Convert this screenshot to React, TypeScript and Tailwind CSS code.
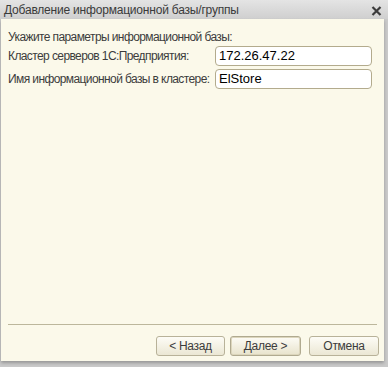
export default function App() {
  return (
    <div className="h-[367px] w-[388px] overflow-hidden bg-[#c9c9c9] font-['Liberation_Sans',Arial,sans-serif]">
      <div className="flex h-[19px] items-center justify-between bg-gradient-to-b from-[#e4e4e4] to-[#cfcfcf] pl-[4px] pr-[6px]">
        <span className="text-[12px] leading-none tracking-[-0.2px] text-[#3a3a3a]">
          Добавление информационной базы/группы
        </span>
        <svg width="11" height="10" viewBox="0 0 11 10" className="mt-[2px]">
          <path d="M1.5 1 L9.5 9 M9.5 1 L1.5 9" stroke="#3c3c3c" strokeWidth="2.2" />
        </svg>
      </div>
      <div className="ml-[1px] flex h-[342px] w-[383px] flex-col bg-[#fbf9ea] shadow-[0_2px_3px_rgba(0,0,0,0.25)]">
        <div className="flex flex-col px-[7px] pt-[11px] text-[12px] tracking-[-0.6px] text-[#3c3c3c]">
          <div className="leading-[14px]">Укажите параметры информационной базы:</div>
          <div className="mt-[2px] flex items-center justify-between pr-[5px]">
            <span>Кластер серверов 1С:Предприятия:</span>
            <div className="flex h-[20px] w-[157px] items-center rounded-[4px] border border-[#b3ab8d] bg-white px-[3px] text-[13px] tracking-normal text-black">
              172.26.47.22
            </div>
          </div>
          <div className="mt-[3px] flex items-center justify-between pr-[5px]">
            <span>Имя информационной базы в кластере:</span>
            <div className="flex h-[20px] w-[157px] items-center rounded-[4px] border border-[#b3ab8d] bg-white px-[3px] text-[13px] tracking-normal text-black">
              ElStore
            </div>
          </div>
        </div>
        <div className="mx-[7px] mt-auto h-[1px] bg-[#bcb79c]"></div>
        <div className="flex justify-end gap-[5px] pb-[5px] pr-[5px] pt-[11px] text-[12px] tracking-[-0.3px] text-[#3c3c3c]">
          <button className="h-[20px] w-[69px] rounded-[3px] border border-[#b8b299] bg-gradient-to-b from-[#fdfcf6] to-[#ebe7d4] leading-none">
            &lt; Назад
          </button>
          <button className="h-[20px] w-[71px] rounded-[3px] border border-[#b0aa90] bg-gradient-to-b from-[#fdfcf6] to-[#e8e3cc] leading-none shadow-[inset_0_0_0_1px_#dcd6bc]">
            Далее &gt;
          </button>
          <button className="ml-[3px] h-[20px] w-[70px] rounded-[3px] border border-[#b8b299] bg-gradient-to-b from-[#fdfcf6] to-[#ebe7d4] leading-none">
            Отмена
          </button>
        </div>
      </div>
    </div>
  );
}
